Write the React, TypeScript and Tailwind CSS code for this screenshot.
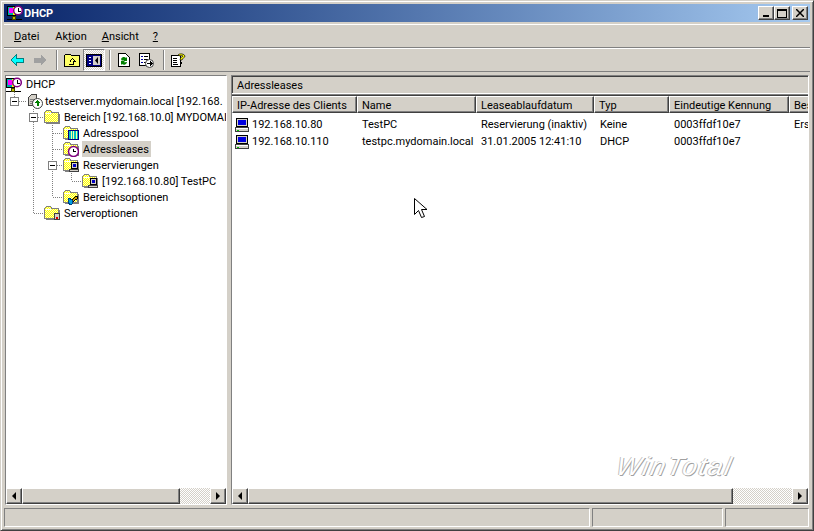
import type { ReactNode } from "react";

function Px({ children, w = 16, h = 16, className = "" }: { children: ReactNode; w?: number; h?: number; className?: string }) {
  return (
    <svg width={w} height={h} viewBox={`0 0 ${w} ${h}`} shapeRendering="crispEdges" className={`shrink-0 ${className}`}>
      {children}
    </svg>
  );
}

// Yellow dithered folder used all over the tree
function FolderShape() {
  return (
    <>
      <defs>
        <pattern id="dither" width="2" height="2" patternUnits="userSpaceOnUse">
          <rect width="2" height="2" fill="#ffffc0" />
          <rect width="1" height="1" fill="#ffff00" />
          <rect x="1" y="1" width="1" height="1" fill="#ffff00" />
        </pattern>
      </defs>
      <path d="M0.5 13.5v-10l2-2h4l1.500 2h6v10z" fill="url(#dither)" stroke="#808080" />
      <path d="M2 4.500h5" stroke="#ffffff" />
      <path d="M1.500 14.500h14.500" stroke="#808080" />
      <path d="M15.500 5v9" stroke="#808080" />
    </>
  );
}

function DhcpIcon() {
  return (
    <Px>
      <rect x="0.5" y="1.500" width="8" height="9" fill="#00a8a8" stroke="#000000" />
      <rect x="2" y="3" width="4" height="5" fill="#ff00ff" />
      <rect x="6" y="2" width="2" height="8" fill="#ffff00" />
      <circle cx="11" cy="5.500" r="4.300" fill="#ffffff" stroke="#800080" strokeWidth="1.500" shapeRendering="auto" />
      <path d="M11.500 3v3h2" stroke="#000000" fill="none" />
      <path d="M0 14.500h15" stroke="#000000" />
      <rect x="5.500" y="11.500" width="3" height="3" fill="#c0c000" stroke="#404000" />
    </Px>
  );
}

function ServerIcon() {
  return (
    <Px>
      <path d="M1.500 4.500l3-3h5v11h-8z" fill="#d4d0c8" stroke="#404040" />
      <path d="M3 6.500h5M3 8.500h5M3 10.500h5" stroke="#808080" />
      <circle cx="10.500" cy="10.500" r="5" fill="#ffffff" stroke="#404040" shapeRendering="auto" />
      <path d="M10.500 7l3 3h-2v3h-2v-3h-2z" fill="#008000" />
    </Px>
  );
}

function PoolIcon() {
  return (
    <Px>
      <FolderShape />
      <rect x="5.500" y="5.500" width="10" height="9" fill="#00c0c0" stroke="#000080" />
      <path d="M8.500 6v8M10.500 6v8M13.500 6v8" stroke="#ffffa0" />
    </Px>
  );
}

function LeaseIcon() {
  return (
    <Px>
      <FolderShape />
      <circle cx="10.500" cy="10.500" r="5" fill="#ffffff" stroke="#800080" strokeWidth="1.500" shapeRendering="auto" />
      <path d="M10.500 7.500v3h2" stroke="#000000" fill="none" />
    </Px>
  );
}

function ReserveIcon() {
  return (
    <Px>
      <FolderShape />
      <rect x="8.500" y="5.500" width="6" height="6" fill="#d4d0c8" stroke="#000000" />
      <rect x="10" y="7" width="3" height="3" fill="#0000c0" />
      <rect x="6.500" y="12.500" width="9" height="2" fill="#d4d0c8" stroke="#404040" />
    </Px>
  );
}

function OptionIcon() {
  return (
    <Px>
      <FolderShape />
      <path d="M7 14l4-5 2-2 2 1-1 2-2 1-4 4z" fill="#d4a000" stroke="#000000" />
      <path d="M6 9l3 2 1 3-2 2-3-2z" fill="#00a0e0" stroke="#004080" />
    </Px>
  );
}

function ServerOptIcon() {
  return (
    <Px>
      <FolderShape />
      <rect x="10.500" y="8.500" width="5" height="6" fill="#d4d0c8" stroke="#404040" />
      <rect x="12" y="12" width="2" height="2" fill="#e00000" />
    </Px>
  );
}

function PlainFolderIcon() {
  return (
    <Px>
      <FolderShape />
    </Px>
  );
}

function ClientIcon() {
  return (
    <Px>
      <rect x="2.500" y="1.500" width="11" height="8" fill="#d4d0c8" stroke="#000000" />
      <rect x="4" y="3" width="8" height="5" fill="#0000e0" />
      <path d="M1.500 10.500h13v4h-13z" fill="#d4d0c8" stroke="#404040" />
      <path d="M2 11.500h12" stroke="#ffffff" />
      <rect x="3" y="13" width="2" height="1" fill="#00c000" />
    </Px>
  );
}

function ExpandBox({ spacer }: { spacer: string }) {
  return (
    <>
      <span className="flex h-[9px] w-[9px] shrink-0 items-center justify-center border border-[#808080] bg-white">
        <span className="h-px w-[5px] bg-black" />
      </span>
      <span className={`${spacer} shrink-0`} />
    </>
  );
}

const treeRows = [
  { label: "DHCP", icon: <DhcpIcon />, cls: "h-[17px]", gap: "ml-[3px]" },
  { label: "testserver.mydomain.local [192.168.", icon: <ServerIcon />, cls: "h-[16px] pl-[4px]", spacer: "w-[8px]", gap: "ml-px" },
  { label: "Bereich [192.168.10.0] MYDOMAI", icon: <PlainFolderIcon />, cls: "h-[16px] pl-[23px]", spacer: "w-[6px]", gap: "ml-[3px]" },
  { label: "Adresspool", icon: <PoolIcon />, cls: "h-[16px] pl-[57px]", gap: "ml-[3px]" },
  { label: "Adressleases", icon: <LeaseIcon />, cls: "h-[16px] pl-[57px]", gap: "ml-[3px]", selected: true },
  { label: "Reservierungen", icon: <ReserveIcon />, cls: "h-[16px] pl-[42px]", spacer: "w-[6px]", gap: "ml-[3px]" },
  { label: "[192.168.10.80] TestPC", icon: <ReserveIcon />, cls: "h-[16px] pl-[76px]", gap: "ml-[3px]" },
  { label: "Bereichsoptionen", icon: <OptionIcon />, cls: "h-[16px] pl-[57px]", gap: "ml-[3px]" },
  { label: "Serveroptionen", icon: <ServerOptIcon />, cls: "h-[16px] pl-[38px]", gap: "ml-[3px]" },
];

const columns = [
  { label: "IP-Adresse des Clients", width: "w-[125px]" },
  { label: "Name", width: "w-[119px]" },
  { label: "Leaseablaufdatum", width: "w-[118px]" },
  { label: "Typ", width: "w-[75px]" },
  { label: "Eindeutige Kennung", width: "w-[120px]" },
  { label: "Bes", width: "w-[60px]" },
];

const leases = [
  ["192.168.10.80", "TestPC", "Reservierung (inaktiv)", "Keine", "0003ffdf10e7", "Ers"],
  ["192.168.10.110", "testpc.mydomain.local", "31.01.2005 12:41:10", "DHCP", "0003ffdf10e7", ""],
];

const raised =
  "border border-t-white border-l-white border-r-[#404040] border-b-[#404040] shadow-[inset_-1px_-1px_0_#808080] bg-[#d4d0c8]";
const sunken = "border border-t-[#808080] border-l-[#808080] border-r-white border-b-white";

function ScrollBar({ thumb }: { thumb: string }) {
  return (
    <div className="flex h-[16px] shrink-0">
      <div className={`flex w-[16px] shrink-0 items-center justify-center ${raised}`}>
        <div className="h-0 w-0 border-y-[4px] border-r-[4px] border-y-transparent border-r-black" />
      </div>
      <div className={`${thumb} shrink-0 ${raised}`} />
      <div className="flex-1 bg-[repeating-conic-gradient(#d4d0c8_0_25%,#ffffff_0_50%)] bg-[length:2px_2px]" />
      <div className={`flex w-[16px] shrink-0 items-center justify-center ${raised}`}>
        <div className="h-0 w-0 border-y-[4px] border-l-[4px] border-y-transparent border-l-black" />
      </div>
    </div>
  );
}

function TitleButton({ children, className = "" }: { children: ReactNode; className?: string }) {
  return <div className={`flex h-[14px] w-[16px] items-center justify-center ${raised} ${className}`}>{children}</div>;
}

function ToolSeparator({ className }: { className: string }) {
  return <span className={`h-[20px] w-[2px] border-l border-l-[#808080] border-r border-r-white ${className}`} />;
}

export default function App() {
  return (
    <div className="relative flex h-[531px] w-[814px] flex-col overflow-hidden border border-t-[#d4d0c8] border-l-[#d4d0c8] border-r-[#404040] border-b-[#404040] bg-[#d4d0c8] p-[3px] text-[11px] leading-none text-black shadow-[inset_1px_1px_0_#ffffff,inset_-1px_-1px_0_#808080] [font-family:Roboto,sans-serif]">
      {/* Title bar */}
      <div className="flex h-[18px] shrink-0 items-center bg-gradient-to-r from-[#0a246a] to-[#a6caf0] pl-[3px] pr-[2px]">
        <DhcpIcon />
        <span className="ml-[1px] font-bold text-white">DHCP</span>
        <div className="ml-auto flex">
          <TitleButton>
            <span className="mt-[6px] h-[2px] w-[6px] bg-black" />
          </TitleButton>
          <TitleButton className="mr-[2px]">
            <span className="h-[9px] w-[10px] border border-t-2 border-black" />
          </TitleButton>
          <TitleButton>
            <Px w={8} h={8}>
              <path d="M0 0l8 8M8 0L0 8" stroke="#000000" strokeWidth="1.500" shapeRendering="auto" />
            </Px>
          </TitleButton>
        </div>
      </div>

      {/* Menu */}
      <div className="mt-[2px] flex h-[24px] shrink-0 items-center border-t border-white border-b border-b-[#808080] pl-[10px] shadow-[0_1px_0_#ffffff]">
        <span><u>D</u>atei</span>
        <span className="ml-[16px]">Ak<u>t</u>ion</span>
        <span className="ml-[15px]"><u>A</u>nsicht</span>
        <span className="ml-[14px]"><u>?</u></span>
      </div>

      {/* Toolbar */}
      <div className="mt-px flex h-[23px] shrink-0 items-center border-b border-b-[#808080] pl-[6px]">
        <Px w={14} h={12}>
          <path d="M1 6l5-5v3h7v4H6v3z" fill="#00ffff" stroke="#008080" />
        </Px>
        <Px w={14} h={12} className="ml-[9px]">
          <path d="M13 6L8 1v3H1v4h7v3z" fill="#a0a0a0" stroke="#a0a0a0" />
        </Px>
        <ToolSeparator className="ml-[9px]" />
        <Px w={16} h={14} className="ml-[6px]">
          <path d="M0.500 13.500v-11l1-1h5l1 1h8v11z" fill="#ffff66" stroke="#000000" />
          <path d="M6 8.500l2.500-3 3 3h-2v3H5" fill="none" stroke="#000000" />
        </Px>
        <div className="ml-[3px] flex h-[22px] w-[22px] items-center justify-center border border-t-[#808080] border-l-[#808080] border-r-white border-b-white bg-[repeating-conic-gradient(#d4d0c8_0_25%,#ffffff_0_50%)] bg-[length:2px_2px]">
          <Px w={16} h={13}>
            <rect x="0.500" y="0.500" width="15" height="12" fill="#000080" stroke="#000000" />
            <rect x="7" y="2" width="7" height="9" fill="#d4d0c8" />
            <path d="M3 3.500h2M3 6.500h2M3 9.500h2" stroke="#ffffff" />
            <path d="M12 3v7L9 6.500z" fill="#000000" shapeRendering="auto" />
          </Px>
        </div>
        <ToolSeparator className="ml-[4px]" />
        <Px w={14} h={16} className="ml-[6px]">
          <path d="M1.500 1.500h7l4 4v9h-11z" fill="#ffffff" stroke="#000000" />
          <path d="M4 7a3 3 0 0 1 5-1l1-1v4H6l1-1a2 2 0 0 0-2 1zM10 10a3 3 0 0 1-5 2l-1 1V9h4l-1 1a2 2 0 0 0 2 0z" fill="#008000" shapeRendering="auto" />
        </Px>
        <Px className="ml-[7px]">
          <path d="M1.500 1.500h10v12h-10z" fill="#ffffff" stroke="#000000" />
          <path d="M3 4.500h2M3 7.500h2M3 10.500h2" stroke="#0000a0" />
          <path d="M6 4.500h4M6 7.500h4M6 10.500h2" stroke="#000000" />
          <circle cx="11.500" cy="11.500" r="4" fill="#ffffff" stroke="#404040" shapeRendering="auto" />
          <path d="M9 11h3V9l2.500 2.500L12 14v-2H9z" fill="#000000" />
        </Px>
        <ToolSeparator className="ml-[9px]" />
        <Px className="ml-[5px]">
          <path d="M1.500 3.500h9v11h-9z" fill="#ffffff" stroke="#000000" />
          <path d="M3 6.500h4M3 8.500h4M3 10.500h4M3 12.500h5" stroke="#000000" />
          <path d="M8 3a4 3 0 0 1 7 1c0 2-3 2-3 4h-2c0-3 3-3 3-4a2 1 0 0 0-3 0z" fill="#ffff00" stroke="#000000" strokeWidth="0.700" shapeRendering="auto" />
          <rect x="10" y="10" width="2" height="2" fill="#000000" />
        </Px>
      </div>

      {/* Panes */}
      <div className="mt-[3px] flex min-h-0 flex-1 gap-[4px] px-px">
        {/* Scope tree */}
        <div className={`flex w-[222px] shrink-0 flex-col ${sunken} shadow-[inset_1px_1px_0_#404040]`}>
          <div className="relative min-h-0 flex-1 overflow-hidden bg-white">
            {/* tree connector lines */}
            <svg width="120" height="150" className="absolute left-0 top-0" shapeRendering="crispEdges">
              <g stroke="#808080" strokeDasharray="1 1" fill="none">
                <path d="M8.500 16v5M13 25.500h8" />
                <path d="M27.500 33v4M27.500 46v92M32 41.500h6M27.500 137.500h11" />
                <path d="M46.500 49v72M46.500 57.500h10M46.500 73.500h10M51 89.500h6M46.500 121.500h10" />
                <path d="M65.500 97v8M65.500 105.500h11" />
              </g>
            </svg>
            {treeRows.map((row) => (
              <div key={row.label} className={`relative flex items-center whitespace-nowrap ${row.cls}`}>
                {row.spacer && <ExpandBox spacer={row.spacer} />}
                {row.icon}
                <span className={`flex h-[16px] items-center pl-px pr-[2px] ${row.gap} ${row.selected ? "bg-[#d4d0c8]" : ""}`}>
                  {row.label}
                </span>
              </div>
            ))}
          </div>
          <ScrollBar thumb="w-[158px]" />
        </div>

        {/* Detail pane */}
        <div className={`flex min-w-0 flex-1 flex-col ${sunken} shadow-[inset_1px_1px_0_#404040]`}>
          <div className="flex h-[17px] shrink-0 items-center pl-[5px] pt-[2px]">Adressleases</div>
          <div className="flex min-h-0 flex-1 flex-col border-t border-t-white">
            <div className="min-h-0 flex-1 overflow-hidden border-t border-t-[#808080] bg-white shadow-[inset_0_1px_0_#404040]">
              <div className="mt-px flex h-[17px]">
                {columns.map((col) => (
                  <div key={col.label} className={`flex ${col.width} shrink-0 items-center pl-[4px] pt-px whitespace-nowrap ${raised}`}>
                    {col.label}
                  </div>
                ))}
              </div>
              <div className="pt-[3px]">
                {leases.map((row) => (
                  <div key={row[0]} className="flex h-[17px] items-center whitespace-nowrap">
                    <div className="flex w-[125px] shrink-0 items-center gap-[2px] pl-[2px]">
                      <ClientIcon />
                      {row[0]}
                    </div>
                    <div className="w-[119px] shrink-0 pl-[5px]">{row[1]}</div>
                    <div className="w-[118px] shrink-0 pl-[5px]">{row[2]}</div>
                    <div className="w-[75px] shrink-0 pl-[6px]">{row[3]}</div>
                    <div className="w-[120px] shrink-0 pl-[5px]">{row[4]}</div>
                    <div className="shrink-0 pl-[5px]">{row[5]}</div>
                  </div>
                ))}
              </div>
            </div>
            <ScrollBar thumb="w-[485px]" />
          </div>
        </div>
      </div>

      {/* Status bar */}
      <div className="mt-[3px] flex h-[19px] shrink-0 gap-[2px] pr-px">
        <div className={`w-[586px] ${sunken}`} />
        <div className={`w-[131px] ${sunken}`} />
        <div className={`flex-1 ${sunken}`} />
      </div>

      {/* Watermark */}
      <div className="absolute left-[616px] top-[452px] -skew-x-12 text-[26px] italic tracking-[2px] text-white [font-family:'Liberation_Sans',sans-serif] [text-shadow:1px_1px_0_#a0a0a0,-1px_0_0_#c0c0c0]">
        WinTotal
      </div>

      {/* Mouse pointer */}
      <svg width="14" height="22" className="absolute left-[413px] top-[197px]" viewBox="0 0 14 22">
        <path d="M0.500 0.500v16l4-4 3 7 3-1-3-7h5.500z" fill="#ffffff" stroke="#000000" />
      </svg>
    </div>
  );
}
